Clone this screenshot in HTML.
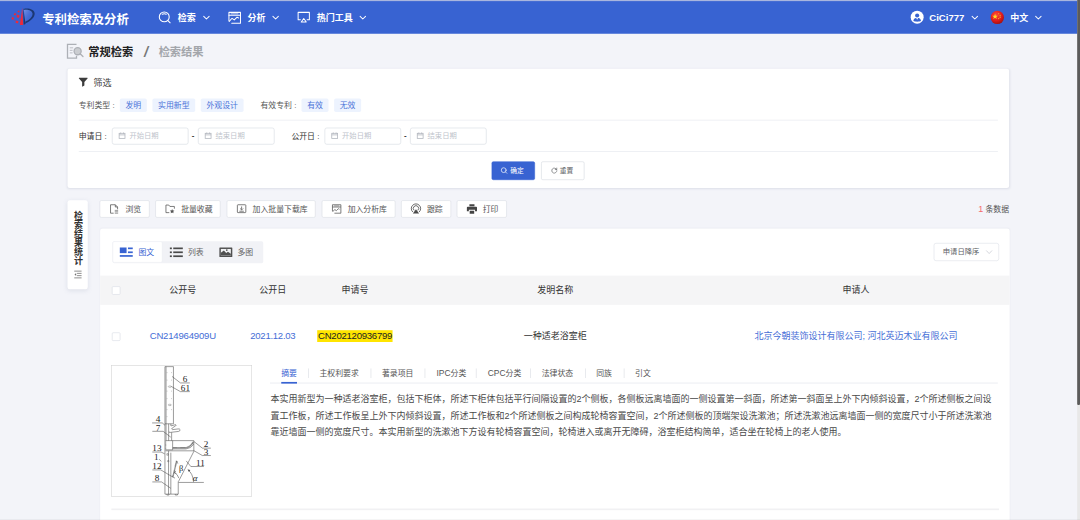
<!DOCTYPE html>
<html lang="zh-CN">
<head>
<meta charset="utf-8">
<title>专利检索及分析</title>
<style>
*{box-sizing:border-box;margin:0;padding:0}
html,body{width:1080px;height:520px;overflow:hidden;background:#f3f4f9}
body{font-family:"Liberation Sans","Noto Sans CJK SC",sans-serif;color:#333}
#stage{position:absolute;left:0;top:0;width:1920px;height:925px;transform:scale(0.5625);transform-origin:0 0;background:#f3f4f9;overflow:hidden}
.abs{position:absolute;white-space:nowrap}
svg{position:absolute;overflow:visible}
/* header */
#hdr{position:absolute;left:0;top:0;width:1920px;height:60px;background:#3863d2}
#hdr .t{position:absolute;color:#fff;font-weight:bold;white-space:nowrap}
.nav{font-size:16px;line-height:20px;top:22.500px}
/* panels */
.panel{position:absolute;background:#fff;border-radius:4px;box-shadow:0 1px 4px rgba(120,130,160,.18)}
.tag{position:absolute;top:53px;height:24px;line-height:24px;font-size:14px;color:#4a72d8;background:#edf3fe;border-radius:3px;text-align:center}
.lbl{position:absolute;font-size:14px;line-height:20px;white-space:nowrap}
.hr{position:absolute;left:20px;width:1634px;height:1.400px;background:#e1e4eb}
.inp{position:absolute;top:105px;width:136px;height:30px;border:1px solid #d3d7df;border-radius:4px;background:#fff}
.inp span{position:absolute;left:30px;top:0;line-height:28px;font-size:13px;color:#c0c4cc;white-space:nowrap}
.inp svg{left:11px;top:7.200px}
.btn{position:absolute;top:164.500px;height:33px;border-radius:3px;font-size:12px;line-height:31px;white-space:nowrap}
.tb{position:absolute;top:355.500px;height:31px;background:#fff;border:1px solid #d8dbe3;border-radius:3px;font-size:14px;line-height:29px;color:#555;white-space:nowrap}
.tb span{position:absolute;left:45px;top:0}
.tb svg{left:17px;top:6px}
.th{position:absolute;top:0;font-size:16px;line-height:52px;color:#333;white-space:nowrap;transform:translateX(-50%)}
.td{position:absolute;font-size:16px;line-height:20px;white-space:nowrap;transform:translateX(-50%)}
.cb{position:absolute;width:15px;height:15px;border:1px solid #d6dae2;border-radius:2px;background:#fff}
.tab{position:absolute;top:0;font-size:14px;line-height:20px;color:#555;white-space:nowrap}
.sep{position:absolute;top:1px;width:1.400px;height:17px;background:#d6d9e0}
</style>
</head>
<body>
<div id="stage">
<div id="hdr">
  <svg style="left:18px;top:12px" width="48" height="36" viewBox="0 0 48 36">
    <defs><linearGradient id="lg" x1="0" y1="0" x2="1" y2="1"><stop offset="0" stop-color="#c9d6fa" stop-opacity=".42"/><stop offset=".7" stop-color="#6a8ae6" stop-opacity=".08"/></linearGradient></defs>
    <path d="M21.700 1.200 L23.200 32.400 L17.200 32.400 Z" fill="#ea2a3c"/>
    <path d="M23.200 2.200 L27.500 30.600 L24 32 Z" fill="#1c3872"/>
    <path d="M24 3.800 C32 1.800 42.500 3.800 43.600 11.500 C44.300 19 36 25.500 27.300 29.400 L26.900 26.800 C34 23.200 40.400 18 39.800 12 C39.200 6.800 31.500 4.200 24.400 5.600 Z" fill="#1c3872"/>
    <path d="M24.400 5.600 C31.500 4.200 39.200 6.800 39.800 12 C40.400 18 34 23.200 26.900 26.800 Z" fill="url(#lg)"/>
    <g fill="#ea2a3c"><rect x="13.500" y="7" width="3" height="3" transform="rotate(20 15 8.500)"/><rect x="7" y="11.500" width="3.600" height="3.600" transform="rotate(25 8.700 13.200)"/><rect x="11.800" y="14.600" width="4.600" height="4.600" transform="rotate(20 14 16.800)"/><rect x="2.600" y="19" width="4" height="4" transform="rotate(25 4.600 21)"/><rect x="10" y="25" width="4.500" height="4.200" transform="rotate(15 12.200 27)"/><rect x="16.500" y="21.500" width="2.200" height="2.200" opacity=".8"/><rect x="1" y="15.500" width="2" height="2" opacity=".5"/><rect x="7.500" y="23.500" width="1.800" height="1.800" opacity=".5"/></g>
  </svg>
  <div class="t" style="left:75px;top:20px;font-size:22px;line-height:30px">专利检索及分析</div>

  <svg style="left:282px;top:20px" width="22" height="22" viewBox="0 0 22 22" fill="none" stroke="#fff" stroke-width="1.900" stroke-linecap="round"><circle cx="10" cy="10" r="8.800"/><path d="M16.500 16.500 L20.500 20.500"/><path d="M6.500 5.200 Q10 3.600 13.500 5.200"/></svg>
  <div class="t nav" style="left:316px">检索</div>
  <svg style="left:361px;top:27.500px" width="12" height="7" viewBox="0 0 12 7" fill="none" stroke="#fff" stroke-width="1.800" stroke-linecap="round" stroke-linejoin="round"><path d="M1.200 1 L6 5.800 L10.800 1"/></svg>

  <svg style="left:406px;top:21px" width="23" height="22" viewBox="0 0 23 22" fill="none" stroke="#fff" stroke-width="1.800" stroke-linejoin="round" stroke-linecap="round"><path d="M6 20.500 H21.500 V1 H1 V16"/><path d="M1 6 H21.500"/><path d="M5 3.600 H17" stroke-width="1.200"/><path d="M1.500 17 L6.500 11.500 L10.500 14.500 L15.500 9.500 L18 11"/></svg>
  <div class="t nav" style="left:440px">分析</div>
  <svg style="left:484px;top:27.500px" width="12" height="7" viewBox="0 0 12 7" fill="none" stroke="#fff" stroke-width="1.800" stroke-linecap="round" stroke-linejoin="round"><path d="M1.200 1 L6 5.800 L10.800 1"/></svg>

  <svg style="left:529px;top:21px" width="22" height="20" viewBox="0 0 22 20" fill="none" stroke="#fff" stroke-width="1.800" stroke-linejoin="round" stroke-linecap="round"><path d="M5 14 H1 V1 H21 V14 H17"/><path d="M11 12 L15.500 18 H6.500 Z" fill="#3863d2"/></svg>
  <div class="t nav" style="left:563px">热门工具</div>
  <svg style="left:639px;top:27.500px" width="12" height="7" viewBox="0 0 12 7" fill="none" stroke="#fff" stroke-width="1.800" stroke-linecap="round" stroke-linejoin="round"><path d="M1.200 1 L6 5.800 L10.800 1"/></svg>

  <svg style="left:1619px;top:19px" width="23" height="23" viewBox="0 0 23 23"><circle cx="11.500" cy="11.500" r="11.500" fill="#fff"/><circle cx="11.500" cy="8.600" r="3.700" fill="#3863d2"/><path d="M4.800 18.500 C5 13.500 8 12.800 11.500 12.800 C15 12.800 18 13.500 18.200 18.500 C15 20 8 20 4.800 18.500 Z" fill="#3863d2"/><path d="M9.800 13 L11.500 16 L13.200 13 Z" fill="#fff"/></svg>
  <div class="t nav" style="left:1652px;top:21.500px;font-size:17px">CiCi777</div>
  <svg style="left:1727px;top:27.500px" width="12" height="7" viewBox="0 0 12 7" fill="none" stroke="#fff" stroke-width="1.800" stroke-linecap="round" stroke-linejoin="round"><path d="M1.200 1 L6 5.800 L10.800 1"/></svg>

  <svg style="left:1761px;top:19px" width="24" height="24" viewBox="0 0 24 24"><defs><radialGradient id="fg" cx=".4" cy=".3" r=".75"><stop offset="0" stop-color="#ff4a3a"/><stop offset=".6" stop-color="#e01b1b"/><stop offset="1" stop-color="#9c1010"/></radialGradient></defs><circle cx="12" cy="12" r="11.800" fill="url(#fg)"/><path d="M8 5.500 L9.300 9 L13 9 L10 11.200 L11.100 14.800 L8 12.600 L4.900 14.800 L6 11.200 L3 9 L6.700 9 Z" fill="#ffd92e"/><circle cx="14.500" cy="5.500" r="1" fill="#ffd92e"/><circle cx="17" cy="8" r="1" fill="#ffd92e"/><circle cx="17" cy="11.500" r="1" fill="#ffd92e"/><circle cx="14.500" cy="14" r="1" fill="#ffd92e"/></svg>
  <div class="t nav" style="left:1796px">中文</div>
  <svg style="left:1840px;top:27.500px" width="12" height="7" viewBox="0 0 12 7" fill="none" stroke="#fff" stroke-width="1.800" stroke-linecap="round" stroke-linejoin="round"><path d="M1.200 1 L6 5.800 L10.800 1"/></svg>
</div>
<div class="abs" style="left:0;top:0;width:1920px;height:2px;background:#a9b6de"></div>

<svg style="left:119px;top:78px" width="30" height="27" viewBox="0 0 30 27" fill="none" stroke="#adb0b6" stroke-width="2.300"><path d="M17 1 H1 V25.500 H17 V21"/><path d="M5 7 H11 M5 11.500 H10 M5 16 H10" stroke-width="1.400"/><circle cx="19" cy="13" r="6.300" fill="#cbcdd1"/><path d="M23.500 17.500 L28.500 22.500" stroke-linecap="round"/></svg>
<div class="abs" style="left:157px;top:78.500px;font-size:20px;line-height:28px;font-weight:bold;color:#222">常规检索</div>
<div class="abs" style="left:255px;top:78.500px;font-size:25px;line-height:28px;color:#777;transform:scaleX(1.5);transform-origin:0 50%">/</div>
<div class="abs" style="left:282px;top:78.500px;font-size:20px;line-height:28px;font-weight:bold;color:#a3a6ab">检索结果</div>

<div class="panel" style="left:120px;top:122px;width:1674px;height:212px">
  <svg style="left:20px;top:16px" width="16" height="16" viewBox="0 0 16 16"><path d="M.6 0 H15.400 Q16.300 .6 15.600 1.500 L10 7.800 V14 L6 16 V7.800 L.4 1.500 Q-.3 .6 .6 0 Z" fill="#3c3c3c"/></svg>
  <div class="lbl" style="left:46px;top:14px;font-size:16px;line-height:22px;color:#444">筛选</div>

  <div class="lbl" style="left:20px;top:55px;color:#555">专利类型 :</div>
  <div class="tag" style="left:93px;width:48px">发明</div>
  <div class="tag" style="left:151px;width:76px">实用新型</div>
  <div class="tag" style="left:237px;width:76px">外观设计</div>
  <div class="lbl" style="left:343px;top:55px;color:#555">有效专利 :</div>
  <div class="tag" style="left:416px;width:48px">有效</div>
  <div class="tag" style="left:474px;width:48px">无效</div>
  <div class="hr" style="top:91px"></div>

  <div class="lbl" style="left:20px;top:110px;color:#333">申请日 :</div>
  <div class="inp" style="left:79px"><svg width="12" height="12" viewBox="0 0 12 12" fill="none" stroke="#b2b6be" stroke-width="1.400"><rect x=".8" y="2" width="10.400" height="9"/><path d="M.8 4.800 H11.200 M3.500 .5 V3 M8.500 .5 V3"/></svg><span>开始日期</span></div>
  <div class="lbl" style="left:221px;top:109px;color:#333;font-weight:bold">-</div>
  <div class="inp" style="left:232px"><svg width="12" height="12" viewBox="0 0 12 12" fill="none" stroke="#b2b6be" stroke-width="1.400"><rect x=".8" y="2" width="10.400" height="9"/><path d="M.8 4.800 H11.200 M3.500 .5 V3 M8.500 .5 V3"/></svg><span>结束日期</span></div>
  <div class="lbl" style="left:398px;top:110px;color:#333">公开日 :</div>
  <div class="inp" style="left:457px"><svg width="12" height="12" viewBox="0 0 12 12" fill="none" stroke="#b2b6be" stroke-width="1.400"><rect x=".8" y="2" width="10.400" height="9"/><path d="M.8 4.800 H11.200 M3.500 .5 V3 M8.500 .5 V3"/></svg><span>开始日期</span></div>
  <div class="lbl" style="left:598px;top:109px;color:#333;font-weight:bold">-</div>
  <div class="inp" style="left:609px"><svg width="12" height="12" viewBox="0 0 12 12" fill="none" stroke="#b2b6be" stroke-width="1.400"><rect x=".8" y="2" width="10.400" height="9"/><path d="M.8 4.800 H11.200 M3.500 .5 V3 M8.500 .5 V3"/></svg><span>结束日期</span></div>
  <div class="hr" style="top:146.600px"></div>

  <div class="btn" style="left:754px;width:77px;background:#3863d2;color:#fff;border:1px solid #3863d2"><svg style="left:15px;top:9px" width="12" height="12" viewBox="0 0 12 12" fill="none" stroke="#fff" stroke-width="1.200" stroke-linecap="round"><circle cx="5.500" cy="5.500" r="4.300"/><path d="M8.800 8.800 L11 11"/></svg><span style="position:absolute;left:32px;top:0">确定</span></div>
  <div class="btn" style="left:842px;width:77px;background:#fff;color:#606266;border:1px solid #d3d7df"><svg style="left:17px;top:10px" width="11" height="11" viewBox="0 0 11 11" fill="none" stroke="#606266" stroke-width="1.200" stroke-linecap="round"><path d="M9.500 3.200 A4.500 4.500 0 1 0 10 5.500"/><path d="M9.800 .8 V3.400 H7.200"/></svg><span style="position:absolute;left:32px;top:0">重置</span></div>
</div>

<div class="panel" style="left:120px;top:356px;width:36px;height:158px;box-shadow:0 2px 8px rgba(120,130,160,.16)">
  <div class="abs" style="left:11.500px;top:20px;width:16px;font-size:16px;line-height:16.200px;font-weight:bold;color:#333;white-space:normal;word-break:break-all;text-align:center">检索结果统计</div>
  <svg style="left:12px;top:125px" width="13" height="14" viewBox="0 0 13 14" fill="none" stroke="#707070" stroke-width="1.400"><path d="M0 1 H13 M5 5 H13 M5 9 H13 M0 13 H13"/><path d="M3.400 4.300 L.4 7 L3.400 9.700 Z" fill="#707070" stroke="none"/></svg>
</div>

<div class="tb" style="left:177px;width:89px"><svg width="16" height="17" viewBox="0 0 16 17" fill="none" stroke="#5a5a5a" stroke-width="1.400" stroke-linejoin="round"><path d="M14 9 V5 L10 1 H1.500 V16 H7"/><path d="M10 1 V5 H14"/><path d="M9 11 H15 M9 13.500 H15 M9 16 H15" stroke-width="1.100"/></svg><span>浏览</span></div>
<div class="tb" style="left:276px;width:116px"><svg width="17" height="17" viewBox="0 0 17 17" fill="none" stroke="#5a5a5a" stroke-width="1.400" stroke-linejoin="round"><path d="M7 15 H1 V1.500 H6 L8 4 H16 V8"/><path d="M12 8.500 L13.200 11 L16 11.400 L14 13.300 L14.500 16 L12 14.700 L9.500 16 L10 13.300 L8 11.400 L10.800 11 Z" fill="#555" stroke="none"/></svg><span>批量收藏</span></div>
<div class="tb" style="left:403px;width:158px"><svg width="17" height="16" viewBox="0 0 17 16" fill="none" stroke="#5a5a5a" stroke-width="1.400" stroke-linejoin="round"><rect x="1" y="1" width="15" height="14" rx="1"/><path d="M8.500 4 V10 M5.800 7.600 L8.500 10.300 L11.200 7.600" /><path d="M4.500 12.500 H12.500"/></svg><span>加入批量下载库</span></div>
<div class="tb" style="left:572px;width:131px"><svg width="17" height="17" viewBox="0 0 17 17" fill="none" stroke="#5a5a5a" stroke-width="1.400" stroke-linejoin="round"><path d="M4.500 16 H16 V1 H1 V12.500"/><path d="M1 5 H16" /><path d="M4 3 H13" stroke-width="1"/><path d="M1.500 13.500 L5 9.500 L8 11.500 L11.500 8 L13.500 9"/></svg><span>加入分析库</span></div>
<div class="tb" style="left:713px;width:89px"><svg width="19" height="18" viewBox="0 0 19 18" fill="none" stroke="#5a5a5a" stroke-width="1.400" style="left:16px;top:5px"><path d="M4 15 A8.300 8.300 0 1 1 15 15" stroke-width="1.600"/><path d="M6.200 12 A4.800 4.800 0 1 1 12.800 12" stroke-width="1.600"/><path d="M9.500 9.800 L15 17.500 H4 Z" fill="#4a4a4a" stroke="none"/></svg><span>跟踪</span></div>
<div class="tb" style="left:812px;width:89px"><svg width="18" height="17" viewBox="0 0 18 17" style="left:17px;top:6px"><path d="M4.500 0 H13.500 V3.500 H4.500 Z M1.500 4.500 H16.500 Q18 4.500 18 6 V12.500 H14.500 V10 H3.500 V12.500 H0 V6 Q0 4.500 1.500 4.500 Z M5 11.500 H13 V17 H5 Z" fill="#444"/></svg><span>打印</span></div>
<div class="abs" style="right:126px;top:361px;font-size:14px;line-height:20px;color:#555"><span style="color:#f56c6c;font-size:16px">1</span> 条数据</div>

<div class="panel" style="left:178px;top:406px;width:1617px;height:560px;box-shadow:0 0 3px rgba(120,130,160,.10)">
  <!-- view tabs -->
  <div class="abs" style="left:22px;top:23px;width:268px;height:39px;background:#f1f2f6;border-radius:3px"></div>
  <div class="abs" style="left:22px;top:23px;width:89px;height:38px;background:#fff;border:1px solid #eceef3;border-radius:3px"></div>
  <svg style="left:35px;top:34px" width="23" height="17" viewBox="0 0 23 17" fill="#3863d2"><rect x="0" y="0" width="12" height="10"/><rect x="14.500" y="0" width="8.500" height="3"/><rect x="14.500" y="7" width="8.500" height="3"/><rect x="0" y="13.500" width="23" height="3"/></svg>
  <div class="abs" style="left:68px;top:32px;font-size:14px;line-height:20px;color:#3863d2">图文</div>
  <svg style="left:124px;top:34px" width="23" height="17" viewBox="0 0 23 17" fill="#4a4a4a"><rect x="0" y="0" width="3.500" height="3"/><rect x="6" y="0" width="17" height="3"/><rect x="0" y="7" width="3.500" height="3"/><rect x="6" y="7" width="17" height="3"/><rect x="0" y="14" width="3.500" height="3"/><rect x="6" y="14" width="17" height="3"/></svg>
  <div class="abs" style="left:156px;top:32px;font-size:14px;line-height:20px;color:#666">列表</div>
  <svg style="left:212px;top:34px" width="23" height="17" viewBox="0 0 23 17"><rect x="0" y="0" width="23" height="17" rx="1" fill="#505050"/><rect x="2.600" y="2.600" width="17.800" height="11.800" fill="#f1f2f4"/><path d="M2.600 14.400 V9.500 L8 5.200 L12.200 9.800 L15.200 7.600 L20.400 11 V14.400 Z" fill="#505050"/><circle cx="13.200" cy="4.600" r="1.500" fill="#505050"/></svg>
  <div class="abs" style="left:244px;top:32px;font-size:14px;line-height:20px;color:#666">多图</div>
  <!-- select -->
  <div class="abs" style="left:1482px;top:26px;width:116px;height:32px;border:1px solid #dcdfe6;border-radius:4px;background:#fff">
    <div class="abs" style="left:15px;top:0;font-size:13px;line-height:30px;color:#606266">申请日降序</div>
    <svg style="left:92px;top:12px" width="11" height="7" viewBox="0 0 11 7" fill="none" stroke="#c0c4cc" stroke-width="1.200" stroke-linecap="round" stroke-linejoin="round"><path d="M.8 .8 L5.500 5.800 L10.200 .8"/></svg>
  </div>
  <!-- table header -->
  <div class="abs" style="left:0;top:84px;width:1617px;height:52px;background:#f5f5f6">
    <div class="cb" style="left:21px;top:19px"></div>
    <div class="th" style="left:147px">公开号</div>
    <div class="th" style="left:307px">公开日</div>
    <div class="th" style="left:453px">申请号</div>
    <div class="th" style="left:809px">发明名称</div>
    <div class="th" style="left:1344px">申请人</div>
  </div>
  <!-- row -->
  <div class="cb" style="left:21px;top:185px"></div>
  <div class="td" style="left:147px;top:181px;color:#446dd6;font-size:17px;letter-spacing:-.35px">CN214964909U</div>
  <div class="td" style="left:307px;top:181px;color:#446dd6;font-size:17px;letter-spacing:-.5px">2021.12.03</div>
  <div class="td" style="left:453px;top:180.500px;color:#222;font-size:17px;letter-spacing:-.45px"><span style="background:#ffe500;display:inline-block;line-height:21px;padding:0 1px 0 1.500px">CN202120936799</span></div>
  <div class="td" style="left:809px;top:181px;color:#333">一种适老浴室柜</div>
  <div class="td" style="left:1344px;top:181px;color:#446dd6">北京今朝装饰设计有限公司; 河北英迈木业有限公司</div>
  <!-- image box -->
  <div class="abs" id="imgbox" style="left:20px;top:242.800px;width:250px;height:234px;border:1px solid #d2d2d2;background:#fff">
<svg style="left:0;top:0" width="248" height="232" viewBox="111.900 365 139.500 130.500" fill="none" stroke="#4a4a4a" stroke-width=".55" font-family="'Liberation Serif',serif" font-size="9.200">
  <!-- tall column -->
  <path d="M164.900 366 V493.500 M173.400 366 V423.200 M164.900 366 H173.400 M166 366 V440" />
  <path d="M164.900 423.200 H173.400" />
  <g stroke-width=".45" stroke="#777"><path d="M166.600 372 h.8 M171 372 h.8 M166.600 379.500 h.8 M171 379.500 h.8 M166.600 390.500 h.8 M171 390.500 h.8 M166.600 398 h.8 M171 398 h.8 M166.600 409 h.8 M171 409 h.8 M166.600 416 h.8"/><ellipse cx="169.800" cy="386" rx="1.600" ry=".7"/><ellipse cx="169.800" cy="404.300" rx="1.600" ry=".7"/></g>
  <!-- labels 6 / 61 -->
  <path d="M172 375.800 L180.400 382.300 H189.800 M171.200 385.800 L180.400 391 H189.800"/>
  <!-- faucet -->
  <path d="M170.800 423.200 V425.300 M168.600 423.200 V430.500 Q168.600 432 170 431.800 L178.500 430.800 Q180.300 430.400 180 429 Q179.600 428 178 428.300 L172.500 429 Q171 428.600 172.200 427.400 L175.500 425.300 Q176.800 424.300 175.500 424 L171 425.300"/>
  <path d="M168.600 431 V440 M171.600 431.800 V440"/>
  <!-- 4 / 7 leaders -->
  <path d="M152.100 422.300 H162.200 L164.900 424.600 M152.300 430.700 H163.100 L170.800 436.600"/>
  <!-- basin -->
  <path d="M165.400 440 H193.800 M172.600 440 V449.200 M165.400 449.200 H172.600 M165.400 450.200 H193.800 M193.800 440 V450.800"/>
  <path d="M172.800 447.200 H185 Q190 446.800 193.400 441.200" stroke-width="1.500" stroke="#444" stroke-dasharray=".55 .35"/>
  <path d="M172.600 448.300 H186 Q191 447.800 193.800 443.500"/>
  <path d="M165.700 441 V449" stroke-width=".9" stroke-dasharray=".4 .4"/>
  <!-- 2 / 3 leaders -->
  <path d="M193.800 440.800 L202.300 447.500 H210.800 M193.800 450 L202.300 454.900 H210.800"/>
  <!-- lower cabinet -->
  <path d="M168.500 450.200 V493.500 M170.800 452 V493.500 M178.200 480.800 V493.500 M164.900 493.500 H178.200"/>
  <path d="M166.800 493.500 v.9 h2.200 v-.9 M175.200 493.500 v.9 h2.200 v-.9" />
  <path d="M193.800 450.800 L178.500 480.800"/>
  <path d="M178.500 481.800 H203.800"/>
  <!-- 13,1,12,8 leaders -->
  <path d="M152.300 451.400 H161 L164.600 453.200 M159.200 458.500 L161.200 460.800 M152.300 469.300 H160.800 L173 476.600 M152.300 481.300 H161.500 L170.800 487.700"/>
  <path d="M166.800 453 h1.400 v1.600 h-1.400 Z M167.300 460.500 a.9 .7 0 1 0 1.800 0 a.9 .7 0 1 0 -1.800 0" stroke-width=".4"/>
  <!-- item 12 bar -->
  <path d="M176.600 460.300 L172.800 476.400" stroke-width="1.500" stroke="#444" stroke-dasharray=".6 .45"/>
  <path d="M176.600 460.300 L177.800 463 M172.800 476.400 L175 477.500"/>
  <!-- beta arcs -->
  <path d="M174.500 472 Q177.500 473.500 178.800 477.500 M176 470.500 L174.300 471.800 L176.300 472.800"/>
  <!-- 11 leader -->
  <path d="M186.200 460.300 L190.800 465.900 H203.800"/>
  <!-- alpha arc -->
  <path d="M187.700 468.900 Q193 473 193.500 481.500"/>
  <path d="M187.700 468.900 L190.300 469.400 L188.900 471.300 Z" fill="#4a4a4a" stroke="none"/>
  <g fill="#1a1a1a" stroke="none">
    <text x="182.800" y="381.700">6</text>
    <text x="180.800" y="390.600">61</text>
    <text x="155.800" y="421.800">4</text>
    <text x="155.800" y="430.200">7</text>
    <text x="203.800" y="446.800">2</text>
    <text x="203.800" y="454.300">3</text>
    <text x="152.300" y="450.800">13</text>
    <text x="154" y="459.200">1</text>
    <text x="152.300" y="468.800">12</text>
    <text x="154.600" y="480.800">8</text>
    <text x="196" y="465.300">11</text>
    <text x="179" y="470.800" font-size="8.500">β</text>
    <text x="192.600" y="480.800" font-size="9" font-style="italic">α</text>
  </g>
</svg>

  </div>
  <!-- tabs -->
  <div class="abs" style="left:302px;top:274px;width:1294px;height:2px;background:#eef0f4"></div>
  <div class="abs" style="left:322px;top:272.800px;width:28px;height:3.400px;background:#3863d2"></div>
  <div class="abs" style="left:302px;top:248px;height:20px">
    <div class="tab" style="left:20px;color:#3863d2">摘要</div><div class="sep" style="left:68px"></div>
    <div class="tab" style="left:88px">主权利要求</div><div class="sep" style="left:179px"></div>
    <div class="tab" style="left:199px">著录项目</div><div class="sep" style="left:275px"></div>
    <div class="tab" style="left:296px"><span style="font-size:15px">IPC</span>分类</div><div class="sep" style="left:366px"></div>
    <div class="tab" style="left:387px"><span style="font-size:15px">CPC</span>分类</div><div class="sep" style="left:463px"></div>
    <div class="tab" style="left:483px">法律状态</div><div class="sep" style="left:560px"></div>
    <div class="tab" style="left:580px">同族</div><div class="sep" style="left:629px"></div>
    <div class="tab" style="left:649px">引文</div>
  </div>
  <!-- abstract -->
  <div class="abs" style="left:303px;top:288px;font-size:16px;line-height:30px;color:#484848">本实用新型为一种适老浴室柜，包括下柜体，所述下柜体包括平行间隔设置的2个侧板，各侧板远离墙面的一侧设置第一斜面，所述第一斜面呈上外下内倾斜设置，2个所述侧板之间设<br>置工作板，所述工作板呈上外下内倾斜设置，所述工作板和2个所述侧板之间构成轮椅容置空间，2个所述侧板的顶端架设洗漱池；所述洗漱池远离墙面一侧的宽度尺寸小于所述洗漱池<br>靠近墙面一侧的宽度尺寸。本实用新型的洗漱池下方设有轮椅容置空间，轮椅进入或离开无障碍，浴室柜结构简单，适合坐在轮椅上的老人使用。</div>
  <div class="abs" style="left:20px;top:498px;width:1578px;height:3px;background:#f1f1f3"></div>
</div>

<div class="abs" style="left:1914.700px;top:0;width:5.300px;height:925px;background:#e8e8e8"></div>
<div class="abs" style="left:1914.700px;top:0;width:5.300px;height:720px;background:#5b5b5b;border-radius:0 0 2px 2px"></div>
<div class="abs" id="bottomline" style="left:0;top:922.700px;width:1920px;height:2.300px;background:rgba(0,0,0,.05)"></div>

</div>
</body>
</html>
